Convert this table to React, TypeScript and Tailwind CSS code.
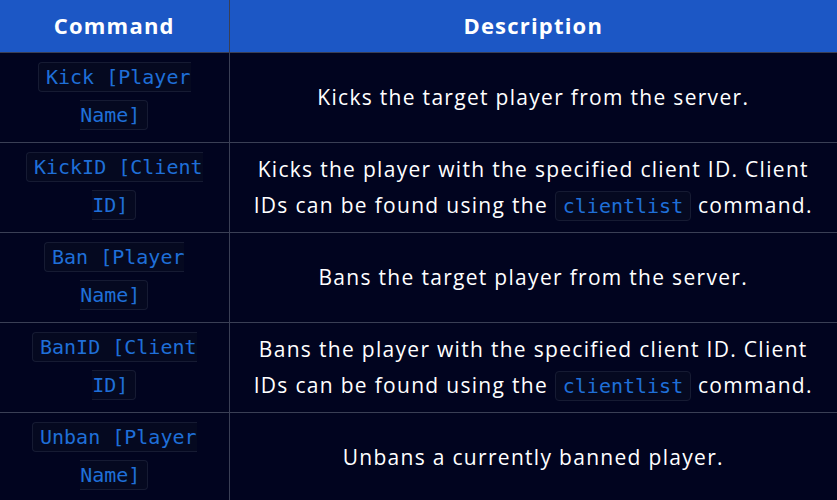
import React from "react";

const Code = ({ children }: { children: React.ReactNode }) => (
  <code
    className="rounded-[4px] border border-[#161b33] bg-[#050920] px-[7px] py-[2px] text-[20px] tracking-normal text-[#1f6fd8]"
    style={{ fontFamily: '"DejaVu Sans Mono", monospace' }}
  >
    {children}
  </code>
);

const rows: { cmd: string; desc: React.ReactNode }[] = [
  { cmd: "Kick [Player Name]", desc: "Kicks the target player from the server." },
  {
    cmd: "KickID [Client ID]",
    desc: (
      <>
        Kicks the player with the specified client ID. Client IDs can be found using the <Code>clientlist</Code> command.
      </>
    ),
  },
  { cmd: "Ban [Player Name]", desc: "Bans the target player from the server." },
  {
    cmd: "BanID [Client ID]",
    desc: (
      <>
        Bans the player with the specified client ID. Client IDs can be found using the <Code>clientlist</Code> command.
      </>
    ),
  },
  { cmd: "Unban [Player Name]", desc: "Unbans a currently banned player." },
];

export default function App() {
  return (
    <div className="h-[500px] w-[837px] overflow-hidden bg-[#01041f]" style={{ fontFamily: '"Open Sans", sans-serif' }}>
      <table className="w-full border-collapse">
        <thead>
          <tr className="h-[52px] bg-[#1c57c5] text-white">
            <th className="w-[229px] border-r border-b border-[#3a3f55] text-[22px] font-bold tracking-[1.2px]">Command</th>
            <th className="border-b border-[#3a3f55] text-[22px] font-bold tracking-[1.2px]">Description</th>
          </tr>
        </thead>
        <tbody>
          {rows.map((r, i) => (
            <tr key={i} className="h-[90px] border-b border-[#3a3f55]">
              <td className="w-[229px] border-r border-[#3a3f55] px-[16px] py-[6px] text-center leading-[37px]">
                <Code>{r.cmd}</Code>
              </td>
              <td className="px-[10px] py-[6px] text-center text-[21px] leading-[36px] tracking-[1.3px] text-white">{r.desc}</td>
            </tr>
          ))}
        </tbody>
      </table>
    </div>
  );
}
